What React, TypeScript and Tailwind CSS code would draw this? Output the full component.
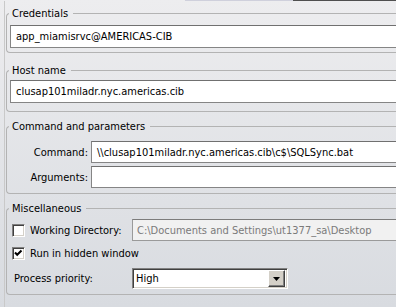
import React from 'react';

const font = "font-['DejaVu_Sans_Condensed','DejaVu_Sans',sans-serif]";

const Group: React.FC<{ title: string; className?: string; children: React.ReactNode }> = ({
  title,
  className,
  children,
}) => (
  <fieldset className={`w-[440px] border border-r-0 border-[#b3b3b3] rounded-l-[4px] ${className ?? ''}`}>
    <legend className="ml-[2px] pl-[3px] pr-[5px] leading-[13px]">{title}</legend>
    {children}
  </fieldset>
);

const TextBox: React.FC<{ value?: string; className?: string }> = ({ value, className }) => (
  <div
    className={`flex-1 bg-white border border-[#858585] border-t-[#707070] pl-[5px] flex items-center whitespace-nowrap ${className ?? ''}`}
  >
    {value}
  </div>
);

const CheckBox: React.FC<{ checked?: boolean }> = ({ checked }) => (
  <div className="w-[13px] h-[13px] bg-white border border-[#808080] border-r-white border-b-white shadow-[inset_1px_1px_0_#404040,inset_-1px_-1px_0_#d4d0c8] flex items-center justify-center">
    {checked && (
      <svg width="9" height="9" viewBox="0 0 9 9">
        <polyline points="1,3.5 3.2,5.8 7.5,1.5" fill="none" stroke="#000" strokeWidth="2" />
      </svg>
    )}
  </div>
);

export default function App() {
  return (
    <div className={`w-[396px] h-[307px] overflow-hidden bg-linear-to-b from-[#ededef] to-[#d8dbe0] text-[11px] leading-[13px] text-black ${font}`}>
      <div className="flex h-px">
        <div className="w-[185px]" />
        <div className="w-[108px] bg-[#cfd0dc]" />
        <div className="flex-1 bg-[#4f4f4f]" />
      </div>
      <div className="ml-[4px] h-full border-l border-[#c9c9c9] pl-px pt-[6px]">
        <Group title="Credentials" className="pb-[4px]">
          <div className="flex ml-[3px] mt-[5px]">
            <TextBox value="app_miamisrvc@AMERICAS-CIB" className="h-[23px]" />
          </div>
        </Group>

        <Group title="Host name" className="mt-[11px] pb-[8px]">
          <div className="flex ml-[3px] mt-[3px]">
            <TextBox value="clusap101miladr.nyc.americas.cib" className="h-[23px]" />
          </div>
        </Group>

        <Group title="Command and parameters" className="mt-[8px] pb-[5px]">
          <div className="flex items-center mt-[8px]">
            <span className="w-[81px] text-right">Command:</span>
            <TextBox value="\\clusap101miladr.nyc.americas.cib\c$\SQLSync.bat" className="h-[22px] ml-[3px]" />
          </div>
          <div className="flex items-center mt-[3px]">
            <span className="w-[81px] text-right">Arguments:</span>
            <TextBox className="h-[22px] ml-[3px]" />
          </div>
        </Group>

        <Group title="Miscellaneous" className="mt-[8px] pb-[5px]">
          <div className="flex items-center mt-[4px] ml-[5px]">
            <CheckBox />
            <span className="w-[102px] ml-[5px]">Working Directory:</span>
            <div className="flex-1 h-[22px] bg-[#f1f1f1] border border-[#9a9a9a] border-t-[#7c7c7c] pl-[4px] flex items-center text-[#7a7a7a] whitespace-nowrap">
              C:\Documents and Settings\ut1377_sa\Desktop
            </div>
          </div>
          <div className="flex items-center mt-[6px] ml-[5px]">
            <CheckBox checked />
            <span className="ml-[5px]">Run in hidden window</span>
          </div>
          <div className="flex items-center mt-[8px] ml-[7px]">
            <span className="w-[118px]">Process priority:</span>
            <div className="w-[156px] h-[21px] bg-white border border-[#808080] border-r-white border-b-white shadow-[inset_1px_1px_0_#404040,inset_-1px_-1px_0_#d4d0c8] flex items-center pl-[3px] pr-[2px] py-[1px]">
              <span className="flex-1">High</span>
              <div className="w-[17px] h-[17px] bg-[#d4d0c8] border border-white border-r-[#404040] border-b-[#404040] shadow-[inset_-1px_-1px_0_#808080] flex items-center justify-center">
                <svg width="7" height="4" viewBox="0 0 7 4">
                  <polygon points="0,0 7,0 3.5,4" fill="#000" />
                </svg>
              </div>
            </div>
          </div>
        </Group>
      </div>
    </div>
  );
}
